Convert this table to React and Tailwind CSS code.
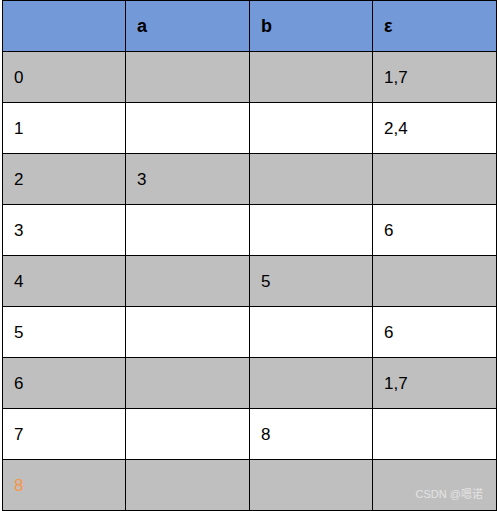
import React from 'react';

const header = ['', 'a', 'b', 'ε'];

const rows = [
 ['0', '', '', '1,7'],
 ['1', '', '', '2,4'],
 ['2', '3', '', ''],
 ['3', '', '', '6'],
 ['4', '', '5', ''],
 ['5', '', '', '6'],
 ['6', '', '', '1,7'],
 ['7', '', '8', ''],
 ['8', '', '', ''],
];

const widths = ['w-[123px]', 'w-[124px]', 'w-[123px]', 'w-[124px]'];

const App = () => {
 return (
 <div className="w-[499px] h-[511px] bg-white font-['Liberation_Sans',Arial,sans-serif]">
 <div className="relative ml-[2px] w-fit border-l border-t border-black">
 {/* head */}
 <div className="flex bg-[#7499d8]">
 {header.map((h, i) => (
 <div key={i} className={`${widths[i]} h-[51px] border-r border-b border-black flex items-center pl-[11px] pt-px text-[18px] font-bold text-black`}>
 {h}
 </div>
 ))}
 </div>
 {rows.map((row, r) => (
 <div key={r} className={`flex ${r % 2 === 0 ? 'bg-[#bfbfbf]' : 'bg-white'}`}>
 {row.map((c, i) => (
 <div key={i} className={`${widths[i]} h-[51px] border-r border-b border-black flex items-center pl-[11px] pt-px text-[17px] ${r === 8 && i === 0 ? 'text-[#f79646]' : 'text-black'}`}>
 {c}
 </div>
 ))}
 </div>
 ))}
 <div className="absolute right-[14px] bottom-[11px] text-[11px] leading-none text-[#e4e4e4] font-['Liberation_Sans','Noto_Sans_CJK_SC',sans-serif]">
 CSDN @嗯诺
 </div>
 </div>
 </div>
 );
};

export default App;
